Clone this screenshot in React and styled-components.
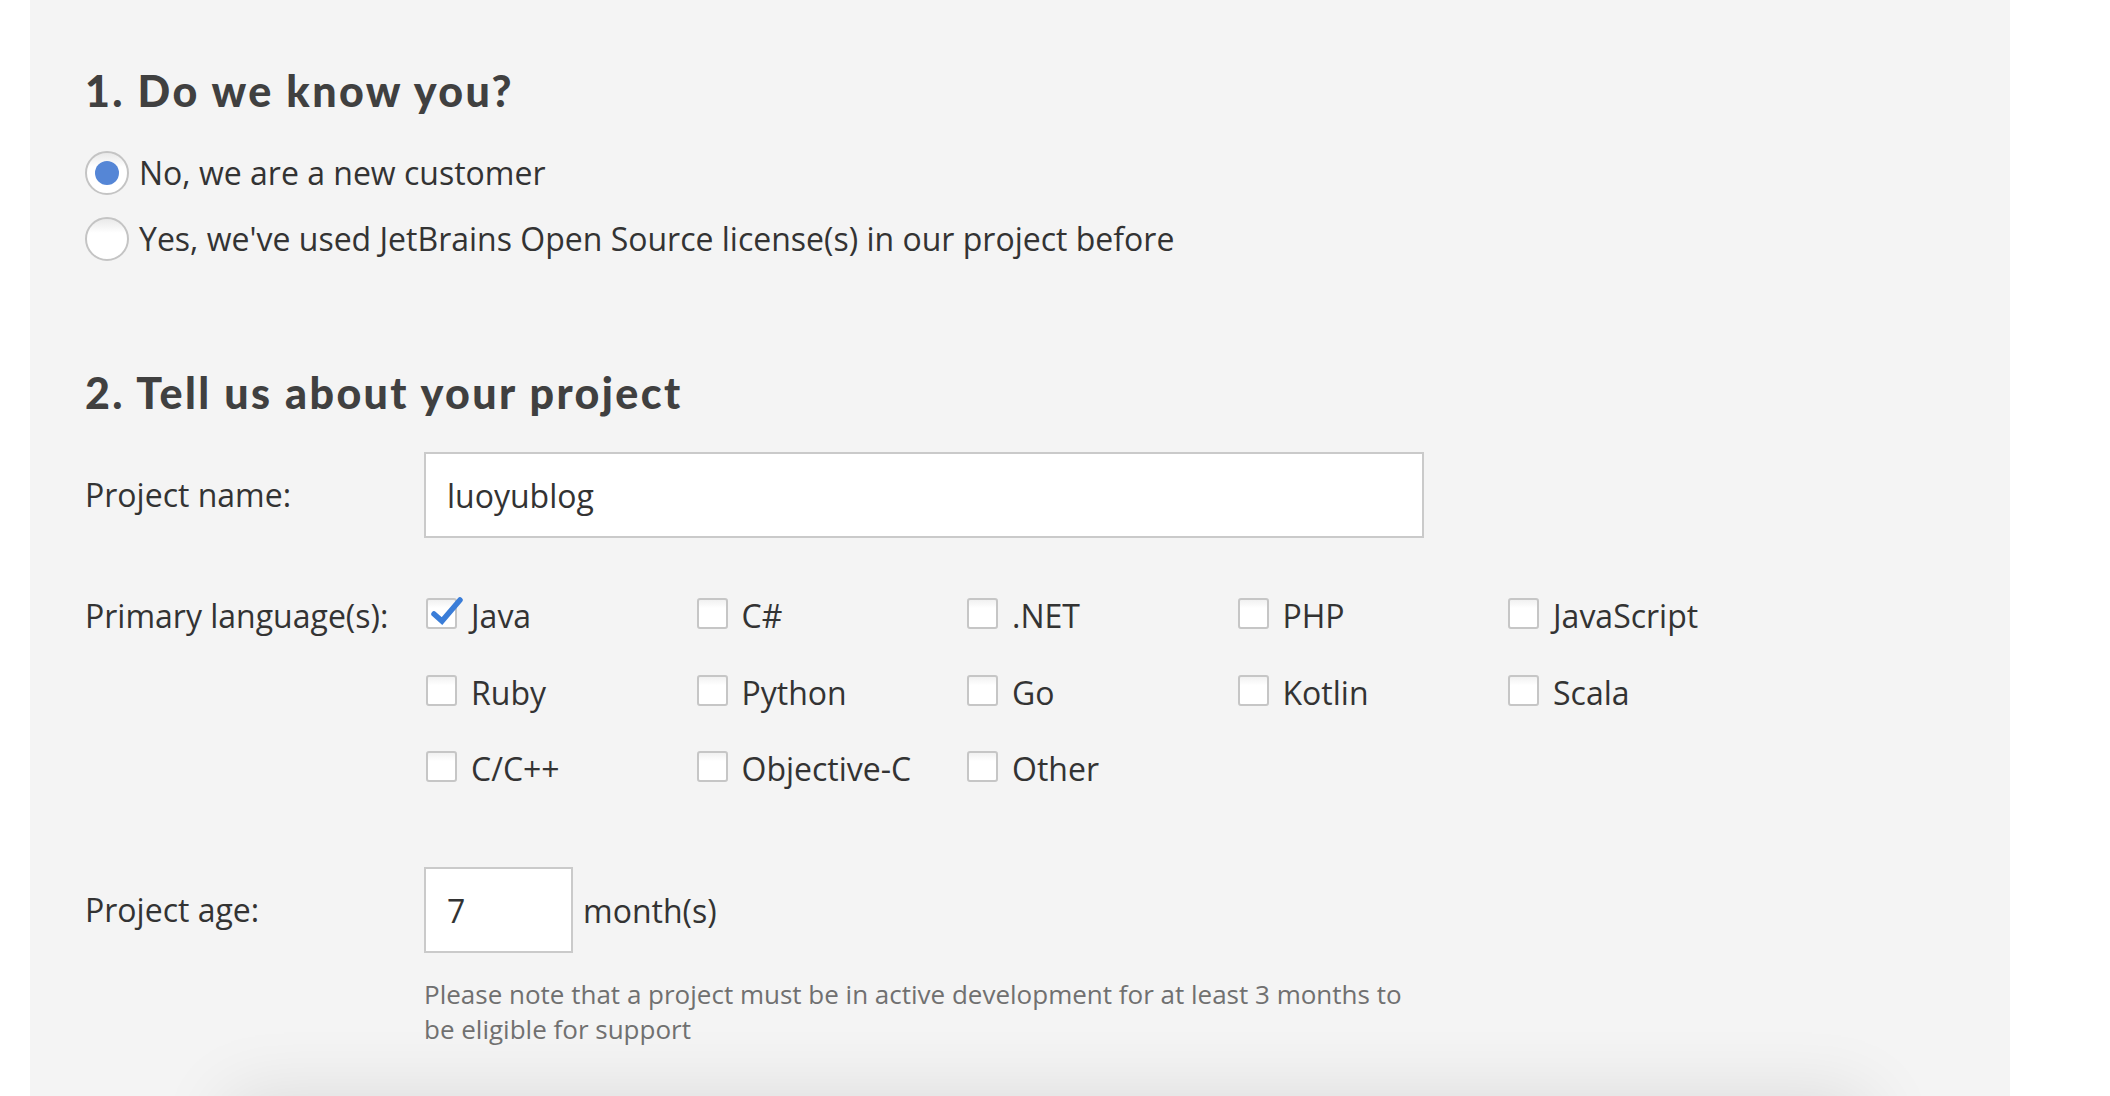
import React from "react";
import styled, { createGlobalStyle } from "styled-components";

const GlobalStyle = createGlobalStyle`
  html, body { margin: 0; padding: 0; background: #ffffff; }
  body { font-family: "Open Sans", "Liberation Sans", sans-serif; color: #333333; }
  * { box-sizing: border-box; }
`;

const Panel = styled.main`
  margin: 0 100px 0 30px;
  background: #f4f4f4;
  padding: 65px 0 0 55px;
  min-height: 1200px;
  overflow: hidden;
`;

const Section = styled.section`
  display: flex;
  flex-direction: column;
  margin-top: ${(p) => p.$top || 0}px;
`;

const Heading = styled.h2`
  margin: 0;
  font-family: "Lato", "Open Sans", sans-serif;
  font-weight: 900;
  font-size: 43px;
  line-height: 52px;
  letter-spacing: 2.4px;
  color: #404040;
  white-space: pre;
`;

const RadioList = styled.div`
  display: flex;
  flex-direction: column;
  gap: 23px;
  margin-top: 34px;
`;

const RadioRow = styled.label`
  display: flex;
  align-items: center;
  gap: 10px;
  height: 43px;
  font-size: 32px;
  color: #333;
`;

const RadioCircle = styled.span`
  width: 44px;
  height: 44px;
  border-radius: 50%;
  border: 2px solid #c4c4c4;
  background: linear-gradient(#e9e9e9 0%, #ffffff 35%, #ffffff 100%);
  display: flex;
  align-items: center;
  justify-content: center;
  flex-shrink: 0;
  &::after {
    content: "";
    width: 24px;
    height: 24px;
    border-radius: 50%;
    background: #5586d6;
    display: ${(p) => (p.$checked ? "block" : "none")};
  }
`;

const FieldRow = styled.div`
  display: grid;
  grid-template-columns: 339px auto;
  align-items: ${(p) => (p.$start ? "start" : "center")};
  margin-top: ${(p) => p.$top}px;
`;

const FieldLabel = styled.span`
  font-size: 32px;
  line-height: 44px;
  color: #333;
`;

const FieldControls = styled.div`
  display: flex;
  align-items: center;
  gap: 10px;
`;

const TextInput = styled.input`
  width: ${(p) => p.$width}px;
  height: 86px;
  border: 2px solid #cacaca;
  background: #ffffff;
  padding: 0 0 0 21px;
  font-family: "Open Sans", "Liberation Sans", sans-serif;
  font-size: 32px;
  color: #333;
  outline: none;
  border-radius: 0;
`;

const Unit = styled.span`
  font-size: 32px;
  color: #333;
`;

const LangGrid = styled.div`
  display: grid;
  grid-template-columns: repeat(5, 270.5px);
  row-gap: 32.5px;
`;

const LangItem = styled.label`
  display: flex;
  align-items: flex-start;
  gap: 14px;
  padding-left: 2px;
  font-size: 32px;
  line-height: 44px;
  color: #333;
`;

const CheckBox = styled.span`
  position: relative;
  width: 31px;
  height: 31px;
  margin-top: 4px;
  border: 2px solid #c6c6c6;
  border-radius: 3px;
  background: linear-gradient(#f1f1f1 0%, #ffffff 30%, #ffffff 100%);
  flex-shrink: 0;
`;

const CheckMark = styled.svg`
  position: absolute;
  left: -2px;
  top: -2px;
  overflow: visible;
`;

const Note = styled.p`
  margin: 24px 0 0 339px;
  max-width: 1000px;
  font-size: 26px;
  line-height: 35px;
  color: #707070;
`;

const NextCard = styled.div`
  margin: 60px auto 0;
  width: 1620px;
  height: 300px;
  background: #f4f4f4;
  box-shadow: 0 0 70px 10px rgba(0, 0, 0, 0.11);
`;

const languages = [
  ["Java", true],
  ["C#"],
  [".NET"],
  ["PHP"],
  ["JavaScript"],
  ["Ruby"],
  ["Python"],
  ["Go"],
  ["Kotlin"],
  ["Scala"],
  ["C/C++"],
  ["Objective-C"],
  ["Other"],
];

export default function App() {
  return (
    <>
      <GlobalStyle />
      <Panel>
        <Section>
          <Heading>{"1.\u00a0Do we know you?"}</Heading>
          <RadioList>
            <RadioRow>
              <RadioCircle $checked />
              No, we are a new customer
            </RadioRow>
            <RadioRow>
              <RadioCircle />
              Yes, we've used JetBrains Open Source license(s) in our project before
            </RadioRow>
          </RadioList>
        </Section>
        <Section $top={107}>
          <Heading>2. Tell us about your project</Heading>
          <FieldRow $top={33}>
            <FieldLabel>Project name:</FieldLabel>
            <FieldControls>
              <TextInput $width={1000} defaultValue="luoyublog" readOnly />
            </FieldControls>
          </FieldRow>
          <FieldRow $top={56} $start>
            <FieldLabel>Primary language(s):</FieldLabel>
            <LangGrid>
              {languages.map(([name, checked]) => (
                <LangItem key={name}>
                  <CheckBox>
                    {checked && (
                      <CheckMark width="31" height="31" viewBox="0 0 31 31">
                        <path
                          d="M8 16 L16 23 L34 2"
                          fill="none"
                          stroke="#3a7dd8"
                          strokeWidth="5.5"
                          strokeLinecap="round"
                          strokeLinejoin="miter"
                        />
                      </CheckMark>
                    )}
                  </CheckBox>
                  {name}
                </LangItem>
              ))}
            </LangGrid>
          </FieldRow>
          <FieldRow $top={76}>
            <FieldLabel>Project age:</FieldLabel>
            <FieldControls>
              <TextInput $width={149} defaultValue="7" readOnly />
              <Unit>month(s)</Unit>
            </FieldControls>
          </FieldRow>
          <Note>
            Please note that a project must be in active development for at least 3 months to be eligible for support
          </Note>
        </Section>
        <NextCard />
      </Panel>
    </>
  );
}
